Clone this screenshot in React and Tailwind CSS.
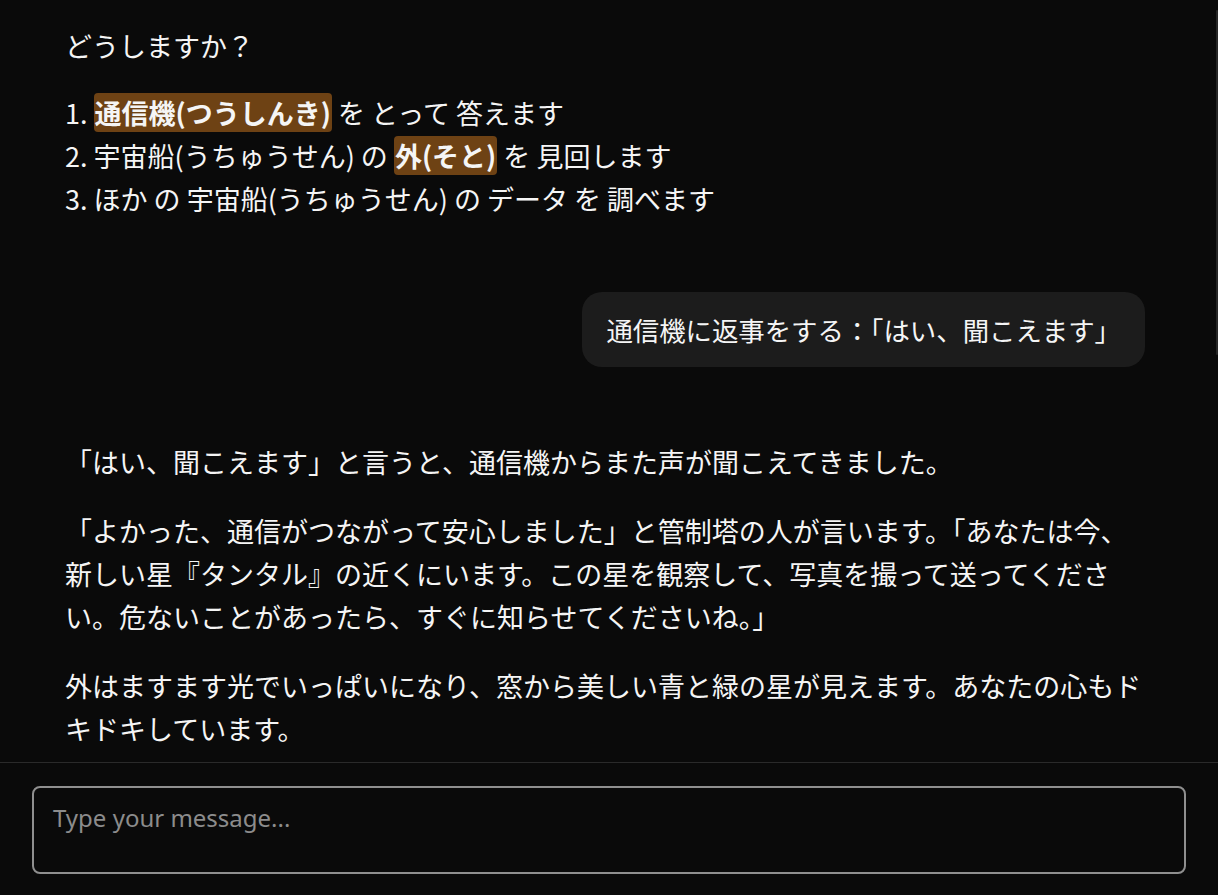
import React from 'react';

const jp = { fontFamily: '"Noto Sans CJK JP", "Noto Sans", sans-serif' };

const Mark = ({ children }) => (
  <span className="bg-[#6e4214] font-bold rounded px-[1px]">{children}</span>
);

const App = () => {
  return (
    <div className="h-[895px] w-full bg-[#0a0a0a] text-[#f5f5f5] flex flex-col overflow-hidden" style={jp}>
      {/* messages */}
      <div className="relative flex-1 overflow-hidden">
        <div className="pl-[65px] pr-[73px] pt-[24px] text-[27px] leading-[43px]">
          <p>どうしますか？</p>
          <ol className="mt-[24px]">
            <li>1. <Mark>通信機(つうしんき)</Mark> を とって 答えます</li>
            <li>2. 宇宙船(うちゅうせん) の <Mark>外(そと)</Mark> を 見回します</li>
            <li>3. ほか の 宇宙船(うちゅうせん) の データ を 調べます</li>
          </ol>

          <div className="flex justify-end mt-[72px]">
            <div className="bg-[#1c1c1c] rounded-[20px] px-6 py-4 text-[26.4px]">
              通信機に返事をする：「はい、聞こえます」
            </div>
          </div>

          <div className="mt-[73px] flex flex-col gap-[26px]">
            <p>「はい、聞こえます」と言うと、通信機からまた声が聞こえてきました。</p>
            <p>「よかった、通信がつながって安心しました」と管制塔の人が言います。「あなたは今、<br />新しい星『タンタル』の近くにいます。この星を観察して、写真を撮って送ってください。危ないことがあったら、すぐに知らせてくださいね。」</p>
            <p>外はますます光でいっぱいになり、窓から美しい青と緑の星が見えます。あなたの心もドキドキしています。</p>
          </div>
        </div>
        {/* scroll thumb */}
        <div className="absolute right-0 top-[10px] w-[2px] h-[345px] bg-[#262626] rounded-full" />
      </div>

      {/* input */}
      <div className="border-t border-[#2a2a2a] px-8 pt-[23px] pb-[21px]">
        <textarea
          placeholder="Type your message..."
          className="w-full h-[88px] block resize-none bg-transparent border-2 border-[#8f8f8f] rounded-lg px-[19px] py-[14px] text-[24px] leading-8 text-white placeholder:text-[#8c8c8c] outline-none"
          style={{ fontFamily: '"Noto Sans", "Noto Sans CJK JP", sans-serif' }}
        />
      </div>
    </div>
  );
};

export default App;
